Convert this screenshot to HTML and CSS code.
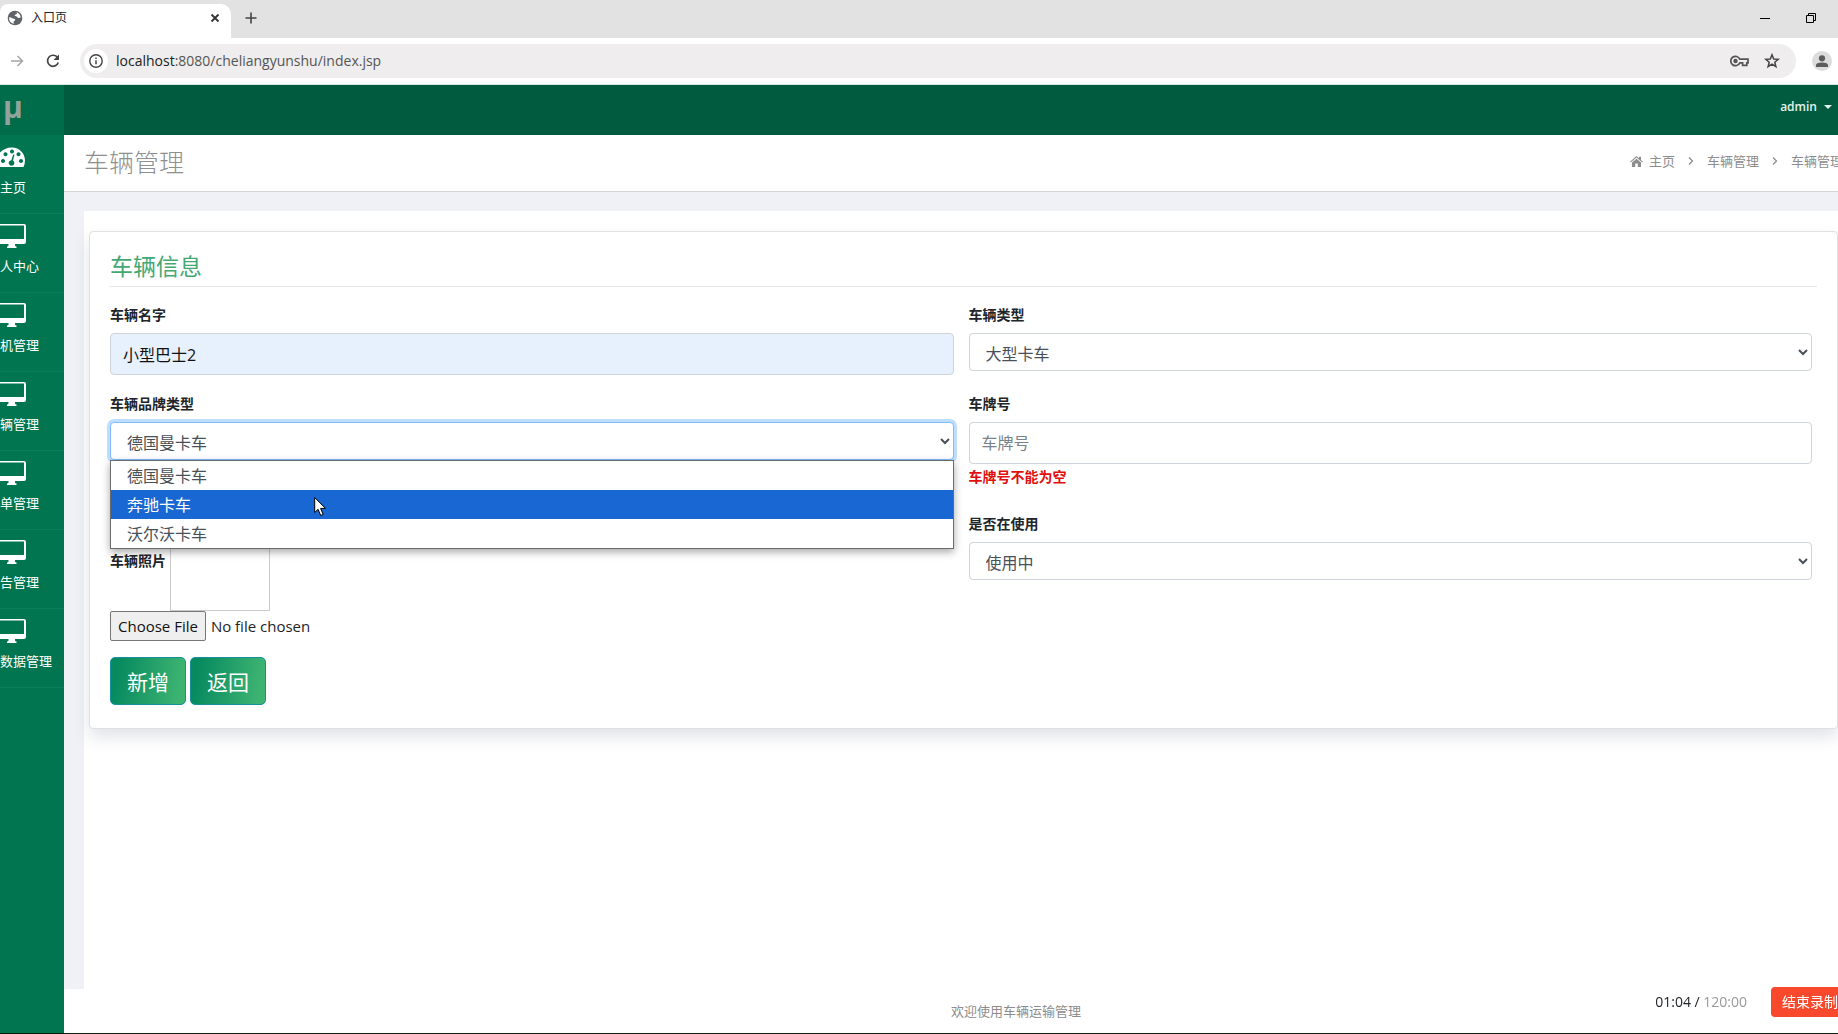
FILE: index.html
```html
<!DOCTYPE html>
<html lang="zh-CN">
<head>
<meta charset="utf-8">
<meta name="viewport" content="width=device-width, initial-scale=1">
<title>入口页</title>
<link rel="stylesheet" href="styles.css">
</head>
<body>
<svg class="sprite" aria-hidden="true">
  <symbol id="desktop" viewBox="0 0 26 24">
    <path fill-rule="evenodd" d="M0 0H24Q26 0 26 2V18Q26 20 24 20H15V21.5Q15 22.3 16.5 22.5V24H7V22.5Q8.500 22.300 8.500 21.500V20H0ZM0 1.500V15H24V1.500Z"/>
  </symbol>
  <symbol id="angle" viewBox="0 0 6 10"><path d="M1 1.500 4.500 5 1 8.500" fill="none" stroke="currentColor" stroke-width="1.300"/></symbol>
</svg>

<header class="browser">
  <div class="tabstrip">
    <div class="tab">
      <svg class="globe" viewBox="0 0 16 16"><circle cx="8" cy="8" r="7.300" fill="#5f6368"/><path d="M2.200 7.200C4 6.800 5.200 8.500 7 8.700S8.300 10.400 7.200 10.900 6.600 13 7.600 13.700C4.500 13.600 1.500 11 2.200 7.200ZM7.500 2.200C10.200 2 10.600 3 9.500 4S7.400 4.500 7.700 5.600 10 6.200 10.700 7.400 13 8 13.700 7.300C13.500 3.800 10.500 1.900 7.500 2.200Z" fill="#fff"/></svg>
      <span class="tab-title">入口页</span>
      <button class="icon-btn" type="button" aria-label="关闭标签页"><svg width="10" height="10" viewBox="0 0 10 10"><path d="M1.500 1.500 8.500 8.500M8.500 1.500 1.500 8.500" stroke="#333" stroke-width="1.800"/></svg></button>
    </div>
    <button class="icon-btn new-tab" type="button" aria-label="新标签页"><svg width="12" height="12" viewBox="0 0 12 12"><path d="M6 0.500V11.500M0.500 6H11.500" stroke="#444" stroke-width="1.600"/></svg></button>
    <div class="window-controls">
      <button class="icon-btn" type="button" aria-label="最小化"><svg width="10" height="10" viewBox="0 0 10 10"><path d="M0 5.500H10" stroke="#000"/></svg></button>
      <button class="icon-btn" type="button" aria-label="还原"><svg width="10" height="10" viewBox="0 0 10 10"><path d="M.5 2.500H7.500V9.500H.5ZM2.500 2.500V.5H9.500V7.500H7.500" fill="none" stroke="#000"/></svg></button>
    </div>
  </div>
  <div class="toolbar">
    <button class="icon-btn" type="button" aria-label="前进"><svg width="13" height="12" viewBox="0 0 13 12"><path d="M0 6H11.500M6.500 1 11.500 6 6.500 11" fill="none" stroke="#a5a5a5" stroke-width="1.500"/></svg></button>
    <button class="icon-btn reload" type="button" aria-label="重新加载"><svg width="14" height="14" viewBox="0 0 14 14"><path d="M11.600 3.600A5.500 5.500 0 1 0 12.300 8.500" fill="none" stroke="#444" stroke-width="1.700"/><path d="M13 0.500V6H7.500Z" fill="#444"/></svg></button>
    <div class="address">
      <span class="site-info"><svg width="14" height="14" viewBox="0 0 14 14"><circle cx="7" cy="7" r="6.200" fill="none" stroke="#444" stroke-width="1.400"/><path d="M7 6.200V10.300M7 3.600V5" stroke="#444" stroke-width="1.500"/></svg></span>
      <span class="url"><span class="host">localhost</span>:8080/cheliangyunshu/index.jsp</span>
      <button class="icon-btn" type="button" aria-label="密码"><svg width="19" height="12" viewBox="0 0 19 12"><path d="M9.800 4.200H18V7.800H16.800V10.300H12.600V7.800H9.800A4.700 4.700 0 1 1 9.800 4.200Z" fill="none" stroke="#555" stroke-width="1.700"/><circle cx="5.500" cy="6" r="2.200" fill="#555"/></svg></button>
      <button class="icon-btn star" type="button" aria-label="收藏"><svg width="16" height="16" viewBox="0 0 16 16"><path d="M8 1.800 9.700 6 14.300 6.300 10.800 9.200 11.900 13.700 8 11.200 4.100 13.700 5.200 9.200 1.700 6.300 6.300 6Z" fill="none" stroke="#444" stroke-width="1.500"/></svg></button>
    </div>
    <button class="icon-btn" type="button" aria-label="用户"><svg width="20" height="20" viewBox="0 0 20 20"><circle cx="10" cy="10" r="10" fill="#dcdcdc"/><circle cx="10" cy="7.300" r="3.100" fill="#5c5c5c"/><path d="M4 16V14Q4 11.500 10 11.500T16 14V16Z" fill="#5c5c5c"/></svg></button>
  </div>
</header>

<div class="app">
  <aside class="sidebar">
    <a class="logo" href="#">μ</a>
    <nav>
      <a class="menu-item" href="#"><svg class="menu-icon" viewBox="0 0 26 24"><path fill-rule="evenodd" d="M0 7.500C2.500 4.500 7 2.500 12 2.500C19.500 2.500 25 8.500 25 15.500Q25 19 23.500 22H0ZM3 14a2 2 0 1 0 .01 0ZM5.500 7.300a2 2 0 1 0 .01 0ZM12 4.500a2 2 0 1 0 .01 0ZM18.500 7.300a2 2 0 1 0 .01 0ZM21 14a2 2 0 1 0 .01 0ZM13.200 9.500 11.300 15.200A2.800 2.800 0 1 0 13 15.600L14.500 9.800Z"/></svg>主页</a>
      <a class="menu-item" href="#"><svg class="menu-icon"><use href="#desktop"/></svg>人中心</a>
      <a class="menu-item" href="#"><svg class="menu-icon"><use href="#desktop"/></svg>机管理</a>
      <a class="menu-item" href="#"><svg class="menu-icon"><use href="#desktop"/></svg>辆管理</a>
      <a class="menu-item" href="#"><svg class="menu-icon"><use href="#desktop"/></svg>单管理</a>
      <a class="menu-item" href="#"><svg class="menu-icon"><use href="#desktop"/></svg>告管理</a>
      <a class="menu-item" href="#"><svg class="menu-icon"><use href="#desktop"/></svg>数据管理</a>
    </nav>
  </aside>

  <div class="main">
    <div class="topbar">
      <button class="user" type="button">admin<span class="caret"></span></button>
    </div>
    <div class="page-head">
      <h1>车辆管理</h1>
      <nav class="breadcrumb">
        <a class="home" href="#"><svg width="13" height="11" viewBox="0 0 13 11"><path d="M6.500 0 9 2.200V.8H11V4L13 5.700 12.300 6.500 6.500 1.600.7 6.500 0 5.700ZM6.500 2.700 11 6.500V11H7.800V7.500H5.200V11H2V6.500Z" fill="#8d8d8d"/></svg>主页</a>
        <svg width="6" height="10"><use href="#angle"/></svg>
        <a href="#">车辆管理</a>
        <svg width="6" height="10"><use href="#angle"/></svg>
        <a href="#">车辆管理</a>
      </nav>
    </div>

    <main class="content">
      <div class="panel">
        <section class="card">
          <h2>车辆信息</h2>
          <form class="form">
            <div class="grid">
              <div class="field">
                <label for="name">车辆名字</label>
                <input class="control autofilled" id="name" type="text" value="小型巴士2">
              </div>
              <div class="field">
                <label for="type">车辆类型</label>
                <select class="control" id="type"><option>大型卡车</option></select>
              </div>
              <div class="field brand">
                <label for="brand">车辆品牌类型</label>
                <select class="control focused" id="brand"><option>德国曼卡车</option></select>
                <ul class="dropdown">
                  <li>德国曼卡车</li>
                  <li class="active">奔驰卡车</li>
                  <li>沃尔沃卡车</li>
                </ul>
                <svg class="cursor" width="13" height="21" viewBox="0 0 13 21"><path d="M.7 1.500V16.500L4.100 13.300 6.700 19.500 9.200 18.400 6.600 12.400H11.500Z" fill="#fff" stroke="#000"/></svg>
              </div>
              <div class="field">
                <label for="plate">车牌号</label>
                <input class="control" id="plate" type="text" placeholder="车牌号">
                <p class="error">车牌号不能为空</p>
              </div>
              <div class="field">
                <div class="photo">
                  <label for="photo">车辆照片</label>
                  <span class="preview"></span>
                </div>
                <input class="file" id="photo" type="file">
              </div>
              <div class="field">
                <label for="used">是否在使用</label>
                <select class="control" id="used"><option>使用中</option></select>
              </div>
            </div>
            <div class="actions">
              <button class="btn" type="button">新增</button>
              <button class="btn" type="button">返回</button>
            </div>
          </form>
        </section>
      </div>
    </main>

    <footer class="footer">欢迎使用车辆运输管理</footer>
  </div>
</div>

<div class="recorder">
  <span class="time">01:04 / <span class="limit">120:00</span></span>
  <button class="stop" type="button">结束录制</button>
</div>
</body>
</html>
```

FILE: styles.css
```css
* {
  box-sizing: border-box;
}

body {
  margin: 0;
  min-height: 100vh;
  display: flex;
  flex-direction: column;
  overflow-x: hidden;
  border-bottom: 1px solid #0c2010;
  font: 14px/22px "Open Sans", "Noto Sans CJK SC", sans-serif;
  color: #212529;
  background: #fff;
}

a {
  color: inherit;
  text-decoration: none;
}

button {
  font: inherit;
  cursor: pointer;
}

.sprite {
  position: absolute;
  width: 0;
  height: 0;
}

.icon-btn {
  display: flex;
  align-items: center;
  padding: 0;
  border: 0;
  background: none;
}

/* Browser frame */
.tabstrip {
  display: flex;
  align-items: center;
  height: 38px;
  padding: 0 22px 2px 0;
  background: #e2e2e2;
}

.tab {
  display: flex;
  align-items: center;
  gap: 8px;
  width: 231px;
  height: 34px;
  margin: 4px 0 -2px;
  padding: 0 11px 6px 7px;
  border-radius: 8px 10px 0 0;
  background: #fff;
}

.globe {
  width: 16px;
  height: 16px;
}

.tab-title {
  flex: 1;
  font-size: 12px;
}

.new-tab {
  margin-left: 14px;
}

.window-controls {
  display: flex;
  gap: 36px;
  margin-left: auto;
}

.toolbar {
  display: flex;
  align-items: center;
  height: 47px;
  padding: 0 6px 0 11px;
  border-bottom: 1px solid #d8e8e0;
}

.reload {
  margin: 0 20px 0 22px;
}

.address {
  flex: 1;
  display: flex;
  align-items: center;
  height: 34px;
  margin-right: 16px;
  padding: 0 16px 0 4px;
  border-radius: 17px;
  background: #efeded;
}

.site-info {
  display: grid;
  place-items: center;
  width: 24px;
  height: 24px;
  border-radius: 50%;
  background: #fff;
}

.url {
  flex: 1;
  margin-left: 8px;
  font-size: 14px;
  color: #555;
}

.host {
  color: #222;
}

.star {
  margin-left: 15px;
}

/* Application shell */
.app {
  flex: 1;
  display: flex;
}

.sidebar {
  width: 64px;
  flex: none;
  color: #fff;
  background: #007550;
}

.logo {
  display: block;
  height: 50px;
  padding-left: 3px;
  font: bold 30px/44px "Open Sans", sans-serif;
  color: #92a39b;
  background: #006c4a;
}

.menu-item {
  display: flex;
  flex-direction: column;
  gap: 8px;
  height: 79px;
  padding-top: 10px;
  border-bottom: 1px solid #0b7d59;
  font-size: 13px;
  line-height: 20px;
  white-space: nowrap;
}

.menu-icon {
  flex: none;
  width: 26px;
  height: 24px;
  fill: #fff;
}

.main {
  flex: 1;
  min-width: 0;
  display: flex;
  flex-direction: column;
  overflow: hidden;
}

.topbar {
  display: flex;
  justify-content: flex-end;
  height: 50px;
  padding-right: 6px;
  background: #005b3f;
}

.user {
  display: flex;
  align-items: center;
  gap: 7px;
  height: 44px;
  padding: 0;
  border: 0;
  font: 600 12px/20px "Open Sans", sans-serif;
  color: #e3f3ec;
  background: none;
}

.caret {
  border: 4px solid transparent;
  border-top-color: #e3f3ec;
  border-bottom: 0;
}

.page-head {
  display: flex;
  align-items: center;
  justify-content: space-between;
  height: 57px;
  padding: 0 0 2px 20px;
  border-bottom: 1px solid #d4d5d9;
}

.page-head h1 {
  margin: 0;
  font-size: 25px;
  font-weight: 300;
  line-height: 36px;
  color: #8f8f8f;
}

.breadcrumb {
  display: flex;
  align-items: center;
  gap: 13px;
  margin-right: -5px;
  padding-bottom: 2px;
  font-size: 13px;
  color: #8d8d8d;
  white-space: nowrap;
}

.home {
  display: flex;
  align-items: center;
  gap: 6px;
}

.content {
  flex: 1;
  display: flex;
  padding: 19px 0 0 20px;
  background: #eff1f6;
}

.panel {
  flex: 1;
  padding: 20px 0 20px 5px;
  background: #fff;
}

.card {
  padding: 20px 20px 23px;
  border: 1px solid #dee0e4;
  border-radius: 4px;
  background: #fff;
  box-shadow: 0 8px 16px rgba(60, 70, 110, 0.15);
}

.card h2 {
  margin: 0 0 17px;
  padding-bottom: 6px;
  border-bottom: 1px solid #e8e8e8;
  font-size: 23px;
  font-weight: 400;
  line-height: 28px;
  color: #45a873;
}

.form {
  padding-right: 5px;
}

.grid {
  display: grid;
  grid-template-columns: 1fr 1fr;
  align-items: start;
  gap: 18px 15px;
}

.field label {
  display: block;
  margin-bottom: 7px;
  font-weight: 700;
}

.control {
  display: block;
  width: 100%;
  height: 42px;
  padding: 6px 12px;
  border: 1px solid #ced4da;
  border-radius: 4px;
  font: inherit;
  font-size: 16px;
  color: #495057;
  background: #fff;
}

.control::placeholder {
  color: #7b838a;
}

select.control {
  height: 38px;
  padding: 8px 12px 6px;
}

.control.autofilled {
  color: #111;
  background: #e7f0fd;
}

.control.focused {
  border-color: #80bdff;
  box-shadow: 0 0 0 3px #bfdeff;
}

.brand {
  position: relative;
}

.dropdown {
  position: absolute;
  top: 67px;
  left: 0;
  right: 0;
  z-index: 1;
  margin: 0;
  padding: 0;
  border: 1px solid #6b6b6b;
  list-style: none;
  font-size: 16px;
  line-height: 27px;
  color: #495057;
  background: #fff;
  box-shadow: 0 3px 8px rgba(0, 0, 0, 0.35);
}

.dropdown li {
  padding: 2px 0 0 16px;
}

.dropdown .active {
  color: #fff;
  background: #1967d2;
}

.cursor {
  position: absolute;
  top: 103px;
  left: 204px;
  z-index: 2;
}

.error {
  margin: 2px 0 7px;
  font-weight: 700;
  color: #e01010;
}

.photo {
  display: flex;
  align-items: center;
  gap: 4px;
}

.photo label {
  margin: 0;
  padding-bottom: 3px;
}

.preview {
  width: 100px;
  height: 98px;
  border: 1px solid #ccc;
}

.file {
  display: block;
  height: 30px;
  font: inherit;
  font-size: 15px;
}

.file::file-selector-button {
  height: 30px;
  margin-right: 5px;
  padding: 1px 7px;
  border: 1px solid #767676;
  border-radius: 2px;
  font: inherit;
  color: #111;
  background: #efefef;
}

.actions {
  display: flex;
  gap: 4px;
  margin-top: 16px;
}

.btn {
  width: 76px;
  height: 48px;
  padding: 2px 0 0;
  border: 1px solid #17909a;
  border-radius: 5px;
  font-size: 21px;
  color: #fff;
  background: linear-gradient(100deg, #078a60 10%, #3cb371 90%);
}

.footer {
  height: 44px;
  padding: 11px 0 0 50%;
  font-size: 13px;
  color: #8d8d8d;
}

/* Recording overlay */
.recorder {
  position: fixed;
  right: 0;
  bottom: 17px;
  display: flex;
  align-items: center;
  gap: 24px;
  font-size: 14px;
}

.limit {
  color: #999;
}

.stop {
  height: 30px;
  padding: 0 0 0 11px;
  border: 0;
  border-radius: 4px 0 0 4px;
  color: #fff;
  background: #f9492c;
}
```
